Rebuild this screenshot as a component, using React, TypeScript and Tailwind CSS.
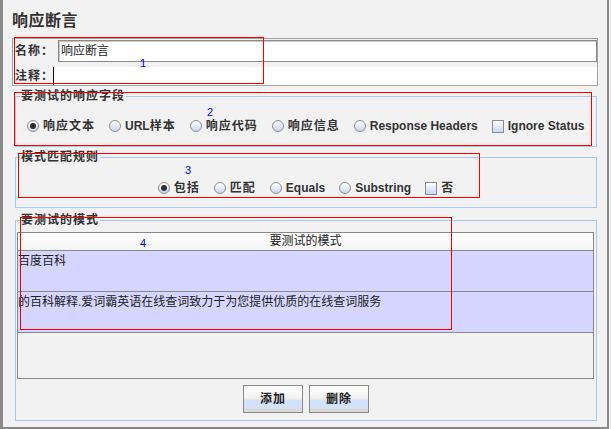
import type { ReactNode } from 'react'

// Swing-style radio: grey ring with a soft blue gradient, dark dot when selected
function Radio({ checked = false }: { checked?: boolean }) {
  return (
    <span className="flex items-center justify-center w-[12px] h-[12px] rounded-full border border-[#8c8c8c] bg-linear-to-b from-white to-[#c9d7f1] shrink-0">
      {checked && <span className="w-[6px] h-[6px] rounded-full bg-[#2e2e2e]" />}
    </span>
  )
}

function Check() {
  return (
    <span className="w-[12px] h-[13px] border border-[#8c8c8c] bg-linear-to-b from-white to-[#c6d6f6] shrink-0" />
  )
}

function Option({ icon, children }: { icon: ReactNode; children: ReactNode }) {
  return (
    <label className="flex items-center gap-[4px] h-[20px] text-[12px] font-bold text-[#333] whitespace-nowrap">
      {icon}
      <span>{children}</span>
    </label>
  )
}

const cjk = 'tracking-[1px]'

// legend sits at the fieldset's content edge, so inner padding goes on the child
function Group({ title, className, children }: { title: string; className: string; children: ReactNode }) {
  return (
    <fieldset className={`ml-[3px] w-[582px] border border-[#a8c9ee] ${className}`}>
      <legend className={`ml-[4px] px-[1px] text-[12px] leading-[16px] font-bold text-[#333] ${cjk}`}>{title}</legend>
      {children}
    </fieldset>
  )
}

const buttonBg =
  'bg-[linear-gradient(to_bottom,#ffffff_0%,#f8f8f8_30%,#eeeeee_50%,#d3e2fb_55%,#d3e2fb_82%,#dadada_88%,#dadada_100%)]'

export default function App() {
  return (
    <div className="relative w-[611px] h-[429px] bg-[#f2f2f2] overflow-hidden font-['Liberation_Sans','Noto_Sans_CJK_SC',sans-serif]">
      <div className="flex flex-col w-[609px] h-[429px] border-l-[3px] border-r-[2px] border-b-[2px] border-[#8a8a8a] pl-[9px]">
        <h1 className="mt-[11px] h-[20px] text-[16px] leading-[20px] font-bold text-[#333] tracking-[0.5px]">响应断言</h1>

        {/* Name / comment */}
        <div className="mt-[7px] w-[586px] h-[48px] border border-[#a3a3a3] flex flex-col">
          <div className="flex mt-[1px] h-[22px]">
            <span className="w-[45px] pl-[2px] text-[12px] leading-[22px] font-bold text-[#333] whitespace-nowrap">
              <span className={cjk}>名称</span>：
            </span>
            <div className="flex-1 border border-[#8a8a8a] shadow-[inset_1px_1px_0_#c8c8c8] bg-white pl-[2px] text-[12px] leading-[20px] text-[#222]">
              响应断言
            </div>
          </div>
          <div className="flex mt-[5px] flex-1">
            <span className="relative z-10 w-[40px] pl-[2px] text-[12px] leading-[18px] font-bold text-[#333] whitespace-nowrap">
              <span className={cjk}>注释</span>：
            </span>
            <div className="flex-1 bg-white border-l border-[#111]" />
          </div>
        </div>

        <Group title="要测试的响应字段" className="mt-[2px] pt-[12px] pb-[10px]">
          <div className="flex items-center gap-[14px] pl-[11px]">
            <Option icon={<Radio checked />}><span className={cjk}>响应文本</span></Option>
            <Option icon={<Radio />}>URL<span className={cjk}>样本</span></Option>
            <Option icon={<Radio />}><span className={cjk}>响应代码</span></Option>
            <Option icon={<Radio />}><span className={cjk}>响应信息</span></Option>
            <Option icon={<Radio />}>Response Headers</Option>
            <Option icon={<Check />}>Ignore Status</Option>
          </div>
        </Group>

        <Group title="模式匹配规则" className="mt-[2px] pt-[13px] pb-[9px]">
          <div className="flex items-center justify-center gap-[14px]">
            <Option icon={<Radio checked />}><span className={cjk}>包括</span></Option>
            <Option icon={<Radio />}><span className={cjk}>匹配</span></Option>
            <Option icon={<Radio />}>Equals</Option>
            <Option icon={<Radio />}>Substring</Option>
            <Option icon={<Check />}><span className={cjk}>否</span></Option>
          </div>
        </Group>

        <Group title="要测试的模式" className="mt-[4px] pt-[4px] pb-[7px]">
          <div className="pl-[1px] pr-[2px]">
            <div className="flex flex-col h-[147px] border border-[#8a8a8a] text-[12px] text-[#222]">
              <div className="h-[18px] border-b border-[#8a8a8a] bg-linear-to-b from-white to-[#f4f4f4] text-center leading-[17px]">
                要测试的模式
              </div>
              <div className="h-[41px] border-b border-[#8a8a8a] bg-[#d5d5ff] pt-[2px] leading-[16px]">百度百科</div>
              <div className="h-[41px] border-b border-[#8a8a8a] bg-[#d5d5ff] pt-[2px] leading-[16px]">
                的百科解释.爱词霸英语在线查词致力于为您提供优质的在线查词服务
              </div>
              <div className="flex-1" />
            </div>
          </div>
          <div className="mt-[6px] flex justify-center gap-[6px]">
            <button className={`w-[60px] h-[28px] border border-[#8a8a8a] ${buttonBg} text-[12px] font-bold text-[#222] ${cjk}`}>添加</button>
            <button className={`w-[60px] h-[28px] border border-[#8a8a8a] ${buttonBg} text-[12px] font-bold text-[#222] ${cjk}`}>删除</button>
          </div>
        </Group>
      </div>

      {/* Red annotation boxes and their numbers */}
      <div className="absolute left-[14px] top-[37px] w-[250px] h-[47px] border border-solid border-[#ff0000]" />
      <div className="absolute left-[14px] top-[92px] w-[578px] h-[54px] border border-solid border-[#ff0000]" />
      <div className="absolute left-[18px] top-[153px] w-[462px] h-[45px] border border-solid border-[#ff0000]" />
      <div className="absolute left-[20px] top-[217px] w-[432px] h-[113px] border border-solid border-[#ff0000]" />
      <span className="absolute left-[140px] top-[56px] text-[11px] leading-[14px] text-[#0000ff]">1</span>
      <span className="absolute left-[207px] top-[105px] text-[11px] leading-[14px] text-[#0000ff]">2</span>
      <span className="absolute left-[185px] top-[163px] text-[11px] leading-[14px] text-[#0000ff]">3</span>
      <span className="absolute left-[140px] top-[236px] text-[11px] leading-[14px] text-[#0000ff]">4</span>
    </div>
  )
}
